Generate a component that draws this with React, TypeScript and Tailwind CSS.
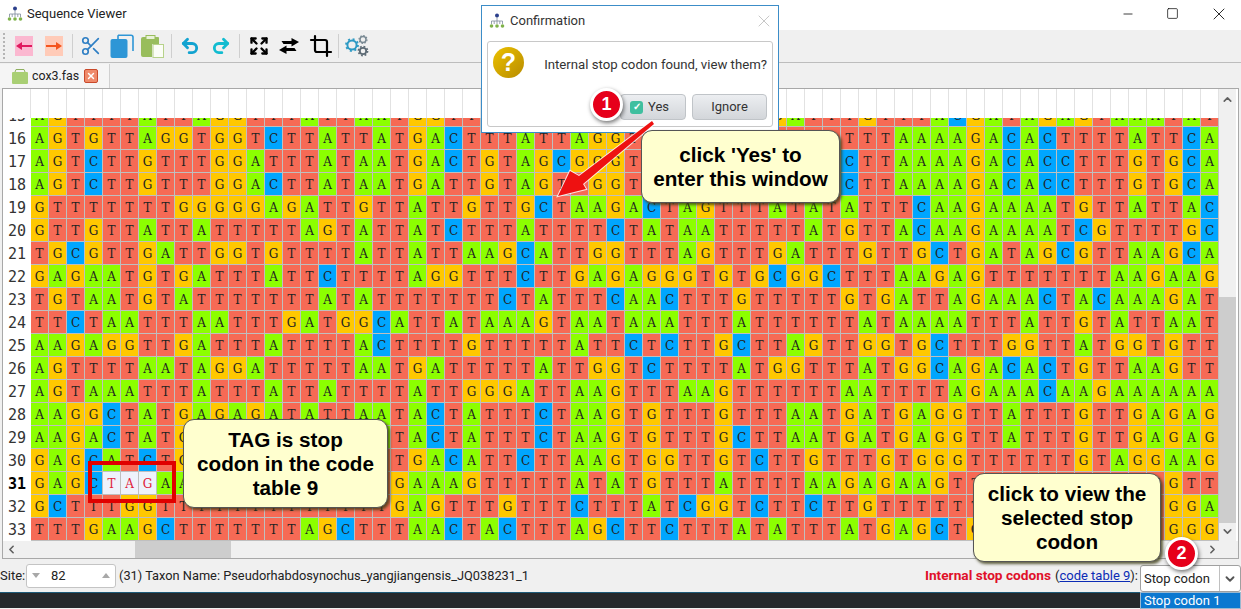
import { Scissors, Undo2, Redo2, Expand, Crop, ChevronUp, ChevronDown, ChevronLeft, ChevronRight, X, Minus, Square } from "lucide-react";

const F = "TTTTTTTTTT";

// one string per taxon, 66 sites each; hidden-by-callout sites are filled with T
const ROWS: [string, string][] = [
  ["15", "AGTTTTATTAGGTTTATTAATG" + "GTT" + F + "TTTTTT" + "GAT" + "TTGTTTACGATAGAGTAAATAT"],
  ["16", "AGTGTTAGGTGGTCTTATTATG" + "ACTTTATTAGGT" + F + "T" + "TTTAAAAGACACTTTTATTCA"],
  ["17", "AGTCTTGTTTGGATTTATAATG" + "ACTGTAGCGGGT" + F + "T" + "CTTAAAAGACACCTTTGTGCA"],
  ["18", "AGTCTTGTTTGGACTTATAATG" + "ATTGTAGTTGGT" + F + "T" + "CTTAAAAGACACCTTTGTGCA"],
  ["19", "GTTTTTTTGGGGGAGATTGTTA" + "TTGTTGCTAAGACTAGTTTATA" + "TATTTCAAGAAAATGTTATTAC"],
  ["20", "GTTGTTATTATTTTTAGTATTA" + "TCTTTATTTTCTATAATTTTTA" + "TGTTACAAGAAAATCGTTTTGC"],
  ["21", "TGCGTTGATTGGTGTTTTATTA" + "TTAAGCATTGGTTTAGTTTGAT" + "TTGTTGCTGATAGCGTTAAGCA"],
  ["22", "GAGAATGTGATTTATTCTTTTA" + "GGTTTCTTGAGAGGGTGTGCGG" + "CTTTAAGAGTTTTTTTAAGAAG"],
  ["23", "TGTAATGTATTTTTTTATATTT" + "TTTTCTATTTCAACTTTGTTTT" + "TGTGATTAGAAACTACAAAGAT"],
  ["24", "TTCTAATTTAATTTGATGGCAT" + "TATAAAGTAATAAATTTATTTT" + "TTATAAAATTTATTGTATTAAT"],
  ["25", "AAGAGGTTGATTTATTTTACTT" + "TTGTTTTTATTCTCTTGCTTAG" + "TTGGTGCTTTGGTTATGGTGTT"],
  ["26", "AGTTTTAATAGGATTTTTAATG" + "ATTTTTATTGGTCTTTTATGGT" + "TTATGGCAGACACTGTTAAGTT"],
  ["27", "AGTAAATTTATTTATTATTTTA" + "TTGGGATTAAGTTTAAGTTTTT" + "TAATTTTAGAAACAAGAAAAAA"],
  ["28", "AAGGCTATGAGAGATATTAATA" + "CTATTTCTAAGTGTTTGTTTAA" + "TGATGAGGTTATTTGTTGAGAG"],
  ["29", "AAGACTATGAGAGATATTAATA" + "CTATTTCTAAGTGTTTGCTTAA" + "TGATGAGGTTATTTGTTGAGAG"],
  ["30", "GAGCATCTG" + F + "T" + "TG" + "ACATTCTTAAGTGGTTGTCTTG" + "TTTGTGGGTTTTTTGTAGGAAG"],
  ["31", "GAGCTAGAA" + F + "T" + "GA" + "AAGTTTTTATATGTTTATTTTA" + "AGAGAAGT" + "T" + F + "GTT"],
  ["32", "GCTTTGGTT" + F + "T" + "GA" + "GTTTGTTTCTTTATCGGTCTTC" + "TTGTTTTT" + "T" + F + "GGA"],
  ["33", "TTTGAAGCTTTTTTTAGCTTTA" + "ACTACTTTAGCTTCTTTATATT" + "TATGAGCT" + "G" + F + "GGG"],
];

const CELL_BG: Record<string, string> = {
  A: "bg-[#8cff00]",
  G: "bg-[#ffc800]",
  T: "bg-[#f66a55]",
  C: "bg-[#00a6ff]",
};

const AppLogo = () => (
  <svg width="16" height="16" viewBox="0 0 16 16">
    <circle cx="8" cy="2.5" r="2" fill="#2b3f8c" />
    <path d="M8 4v4M2.5 11V8h11v3M8 8v3M5.2 8v3M10.8 8v3" stroke="#7d8a9c" strokeWidth="0.8" fill="none" />
    <circle cx="2.5" cy="13" r="1.8" fill="#7fb24a" />
    <circle cx="8" cy="13" r="1.8" fill="#7fb24a" />
    <circle cx="13.5" cy="13" r="1.8" fill="#7fb24a" />
  </svg>
);

const NavArrow = ({ dir }: { dir: "left" | "right" }) =>
  dir === "left" ? (
    <svg width="18" height="20" viewBox="0 0 18 20">
      <rect width="18" height="20" fill="#fbb8d0" />
      <path d="M1 10l6-4v3h10v2H7v3z" fill="#e0195f" />
    </svg>
  ) : (
    <svg width="18" height="20" viewBox="0 0 18 20">
      <rect width="18" height="20" fill="#ffcbb8" />
      <path d="M17 10l-6-4v3H1v2h10v3z" fill="#f4551e" />
    </svg>
  );

const CopyIcon = () => (
  <svg width="24" height="24" viewBox="0 0 24 24">
    <path d="M8 1.2h13a2 2 0 0 1 2 2V17" fill="none" stroke="#2e96d6" strokeWidth="1.6" />
    <path d="M8 1.2V5" stroke="#2e96d6" strokeWidth="1.6" />
    <rect x="0.5" y="5" width="17" height="19" rx="2" fill="#2e96d6" />
  </svg>
);

const PasteIcon = () => (
  <svg width="23" height="24" viewBox="0 0 23 24">
    <path d="M2 3h15a1 1 0 0 1 1 1v6H11v13H2a2 2 0 0 1-2-2V5a2 2 0 0 1 2-2z" fill="#98bd5c" />
    <rect x="5" y="1.5" width="9" height="4" fill="#e9f2d8" stroke="#98bd5c" />
    <rect x="12" y="10.5" width="10.5" height="13" fill="#fbfdf6" stroke="#b7d28a" />
  </svg>
);

const SwapIcon = () => (
  <svg width="20" height="16" viewBox="0 0 20 16">
    <path d="M12.5 0L20 4l-7.5 4.5V6H4.5L2.5 3h10z" fill="#000" />
    <path d="M7.5 16L0 12l7.5-4.5V10H15.5l2 3h-10z" fill="#000" />
  </svg>
);

const GearsIcon = () => (
  <svg width="24" height="23" viewBox="0 0 24 23">
    <circle cx="7" cy="10" r="4.6" fill="none" stroke="#2e9ac4" strokeWidth="2" />
    <circle cx="7" cy="10" r="6" fill="none" stroke="#2e9ac4" strokeWidth="1.8" strokeDasharray="2 2.7" />
    <circle cx="18" cy="4.5" r="3" fill="none" stroke="#7a8a94" strokeWidth="1.5" />
    <circle cx="18" cy="4.5" r="4" fill="none" stroke="#7a8a94" strokeWidth="1.2" strokeDasharray="1.5 1.6" />
    <circle cx="18" cy="16" r="3.2" fill="none" stroke="#5d6b75" strokeWidth="1.8" />
    <circle cx="18" cy="16" r="4.6" fill="none" stroke="#5d6b75" strokeWidth="1.6" strokeDasharray="1.8 1.8" />
  </svg>
);

const ToolSep = () => <div className="w-px h-[24px] bg-[#cfcfcf]" />;

const Toolbar = () => (
  <div className="h-[33px] bg-[#f0f0f0] border-b border-[#bdbdbd] flex items-center pl-[3px]">
    <div className="h-[26px] w-[2px] border-l-2 border-dotted border-[#b5b5b5] mr-[10px]" />
    <NavArrow dir="left" />
    <div className="ml-[12px]"><NavArrow dir="right" /></div>
    <div className="ml-[9px]"><ToolSep /></div>
    <Scissors className="ml-[7px] text-[#2f7fc4]" size={22} strokeWidth={1.8} />
    <div className="ml-[8px]"><CopyIcon /></div>
    <div className="ml-[7px]"><PasteIcon /></div>
    <div className="ml-[7px]"><ToolSep /></div>
    <Undo2 className="ml-[8px] text-[#12a3d0]" size={20} strokeWidth={3.4} />
    <Redo2 className="ml-[11px] text-[#12bcd0]" size={20} strokeWidth={3.4} />
    <div className="ml-[8px]"><ToolSep /></div>
    <Expand className="ml-[9px] text-black" size={20} strokeWidth={2.8} />
    <div className="ml-[10px]"><SwapIcon /></div>
    <Crop className="ml-[10px] text-black" size={24} strokeWidth={2.2} />
    <div className="ml-[5px]"><ToolSep /></div>
    <div className="ml-[6px]"><GearsIcon /></div>
  </div>
);

const TabStrip = () => (
  <div className="h-[25px] bg-[#f0f0f0] flex items-end">
    <div className="h-[24px] w-[110px] bg-[#f5f5f5] border-r border-[#d0d0d0] flex items-center pl-[12px] text-[12.4px] text-[#222]">
      <svg width="16" height="15" viewBox="0 0 16 15">
        <path d="M3 3l1-2.5h8L13 3" fill="none" stroke="#8fb060" />
        <rect y="3" width="16" height="12" rx="1" fill="#a9cf74" />
      </svg>
      <span className="ml-[4px] w-[52px]">cox3.fas</span>
      <span className="w-[14px] h-[14px] rounded-[2px] bg-[#ef8a6b] border border-[#c9492a] flex items-center justify-center">
        <X size={10} strokeWidth={3.5} className="text-white" />
      </span>
    </div>
  </div>
);

const SeqRow = ({ label, seq }: { label: string; seq: string }) => {
  const isStopRow = label === "31";
  return (
    <div className="flex h-[23px]">
      <div
        className={`w-[28px] shrink-0 pl-[5px] pt-px text-[15px] leading-[23px] text-[#333] font-['DejaVu_Sans_Mono',monospace] ${isStopRow ? "font-bold text-black" : ""}`}
      >
        {label}
      </div>
      {seq.split("").map((base, i) => {
        const stop = isStopRow && i >= 4 && i <= 6;
        return (
          <div
            key={i}
            className={`w-[18px] h-[23px] shrink-0 border-r border-b border-[#bfbfbf] flex items-center justify-center pt-px text-[12px] font-['DejaVu_Serif',serif] ${stop ? "bg-[#eef2fb] text-[#e0203a]" : `${CELL_BG[base]} text-[#222]`}`}
          >
            {base}
          </div>
        );
      })}
    </div>
  );
};

const SeqPanel = () => (
  <div className="mx-[2px] h-[471px] border border-[#a8a8a8] flex flex-col bg-white">
    <div className="flex flex-1 min-h-0">
      <div className="w-[1216px] flex flex-col">
        <div className="h-[29px] flex shrink-0">
          <div className="w-[28px] border-r border-[#e2e2e2]" />
          {Array.from({ length: 66 }).map((_, i) => (
            <div key={i} className="w-[18px] shrink-0 border-r border-[#e2e2e2]" />
          ))}
        </div>
        <div className="h-[423px] overflow-hidden">
          <div className="-mt-[14px]">
            {ROWS.map(([label, seq]) => (
              <SeqRow key={label} label={label} seq={seq} />
            ))}
          </div>
        </div>
      </div>
      <div className="w-[17px] bg-[#f0f0f0] flex flex-col items-center relative">
        <ChevronUp size={13} strokeWidth={3} className="mt-[4px] text-[#606060]" />
        <div className="w-full h-[226px] bg-[#cdcdcd] mt-[191px]" />
        <ChevronDown size={13} strokeWidth={3} className="mt-[2px] text-[#606060]" />
      </div>
    </div>
    <div className="h-[17px] bg-[#f0f0f0] flex items-center">
      <ChevronLeft size={13} strokeWidth={3} className="ml-[2px] text-[#606060]" />
      <div className="ml-[117px] w-[96px] h-full bg-[#cdcdcd]" />
      <ChevronRight size={13} strokeWidth={3} className="ml-auto mr-[19px] text-[#606060]" />
    </div>
  </div>
);

const StatusBar = () => (
  <div className="h-[33px] bg-[#f0f0f0] flex items-center text-[13px] text-[#222] relative">
    <span className="w-[26px]">Site:</span>
    <div className="w-[90px] h-[24px] bg-white border border-[#c4c4c4] rounded-[3px] flex items-center px-[5px]">
      <span className="w-0 h-0 border-x-[4px] border-x-transparent border-t-[5px] border-t-[#a8a8a8]" />
      <span className="ml-[11px]">82</span>
      <span className="ml-auto w-0 h-0 border-x-[4px] border-x-transparent border-b-[5px] border-b-[#a8a8a8]" />
    </div>
    <span className="ml-[3px] text-[12.8px]">(31) Taxon Name: Pseudorhabdosynochus_yangjiangensis_JQ038231_1</span>
    <span className="ml-auto font-bold text-[13.7px] text-[#e0102a]">Internal stop codons</span>
    <span className="ml-[4px]">
      (<span className="text-[#0b2bb5] underline">code table 9</span>):
    </span>
    <div className="ml-[2px] mt-[6px] w-[101px] h-[27px] bg-white border border-[#a0a0a0] rounded-[3px] flex items-center pl-[3px]">
      <span>Stop codon</span>
      <span className="ml-auto h-full w-[21px] border-l border-[#c0c0c0] flex items-center justify-center">
        <ChevronDown size={14} strokeWidth={3.2} className="text-[#555]" />
      </span>
    </div>
  </div>
);

const Badge = ({ n, className }: { n: number; className: string }) => (
  <div
    className={`absolute w-[33px] h-[33px] rounded-full border-[3px] border-white bg-[#e6001a] shadow-[1px_2px_4px_rgba(0,0,0,0.55)] flex items-center justify-center text-white font-bold text-[18px] font-['Liberation_Sans',sans-serif] ${className}`}
  >
    {n}
  </div>
);

const Callout = ({ lines, className }: { lines: string[]; className: string }) => (
  <div
    className={`absolute bg-[#ffffcf] border border-[#555] rounded-[11px] shadow-[2px_2px_3px_rgba(60,60,20,0.8)] flex flex-col items-center justify-center pt-px text-black font-bold text-[20.7px] leading-[24px] font-['Liberation_Sans',sans-serif] ${className}`}
  >
    {lines.map((l) => (
      <span key={l}>{l}</span>
    ))}
  </div>
);

const ConfirmDialog = () => (
  <div className="absolute left-[481px] top-[5px] w-[298px] h-[128px] bg-white border border-[#3c8dc8] flex flex-col text-[13px] text-[#333]">
    <div className="h-[29px] mb-[6px] flex items-center pl-[7px] pr-[4px] shrink-0">
      <AppLogo />
      <span className="ml-[5px]">Confirmation</span>
      <X size={20} strokeWidth={0.8} className="ml-auto text-[#aaa]" />
    </div>
    <div className="mx-[5px] h-[86px] border border-[#c8c8c8] rounded-[3px] pl-[5px] pr-[5px] pt-[5px] flex flex-col">
      <div className="flex items-start">
        <div className="w-[31px] h-[31px] rounded-full bg-gradient-to-br from-[#ecc100] to-[#b88c00] flex items-center justify-center text-white font-bold text-[25px] leading-none font-['Liberation_Sans',sans-serif]">
          ?
        </div>
        <span className="ml-auto mt-[8px] text-[13.2px]">Internal stop codon found, view them?</span>
      </div>
      <div className="flex justify-end gap-[6px] mt-[16px]">
        <div className="w-[66px] h-[26px] rounded-[4px] border border-[#c0c4c8] bg-gradient-to-b from-[#eceef1] to-[#d3d6da] flex items-center pl-[9px]">
          <span className="w-[13px] h-[13px] rounded-[3px] bg-[#3fbf9f] flex items-center justify-center text-white text-[10px] leading-none font-bold mr-[5px]">
            ✓
          </span>
          Yes
        </div>
        <div className="w-[75px] h-[26px] rounded-[4px] border border-[#c0c4c8] bg-gradient-to-b from-[#eceef1] to-[#d3d6da] flex items-center justify-center">
          Ignore
        </div>
      </div>
    </div>
  </div>
);

const PointerArrow = () => (
  <svg className="absolute left-[550px] top-[115px]" width="110" height="90" viewBox="550 115 110 90">
    <polygon points="652,121 579,176 570,171 558,196 586,189 583,184 654,124" fill="#e8e8e8" opacity="0.8" stroke="#fff" strokeWidth="2" />
    <polygon points="652,121 579,176 570,171 558,196 586,189 583,184 654,124" fill="#ee1111" />
  </svg>
);

const App = () => (
  <div className="relative w-[1241px] h-[609px] overflow-hidden bg-[#f0f0f0] font-['Roboto',sans-serif]">
    {/* Title bar */}
    <div className="h-[30px] pb-[3px] bg-white flex items-center pl-[7px] text-[13px] text-[#222]">
      <AppLogo />
      <span className="ml-[4px]">Sequence Viewer</span>
      <Minus size={14} strokeWidth={1.3} className="ml-auto text-black" />
      <Square size={13} strokeWidth={1.3} className="ml-[31px] text-black" />
      <X size={20} strokeWidth={1} className="ml-[30px] mr-[12px] text-black" />
    </div>
    <Toolbar />
    <TabStrip />
    <SeqPanel />
    <StatusBar />
    <div className="h-[16px] bg-[#25282b] border-t border-[#1d5a78]" />

    {/* Overlays */}
    <div className="absolute left-[1140px] top-[592px] w-[101px] h-[17px] bg-[#0b78d0] border border-[#9bb8cf] text-white text-[13px] leading-[15px] pl-[3px]">
      Stop codon 1
    </div>
    <ConfirmDialog />
    <PointerArrow />
    <div className="absolute left-[88px] top-[461px] w-[88px] h-[42px] border-[4px] border-[#e00000]" />
    <Callout lines={["click 'Yes' to", "enter this window"]} className="left-[641px] top-[130px] w-[199px] h-[73px]" />
    <Callout lines={["TAG is stop", "codon in the code", "table 9"]} className="left-[183px] top-[419px] w-[205px] h-[89px]" />
    <Callout lines={["click to view the", "selected stop", "codon"]} className="left-[973px] top-[473px] w-[188px] h-[89px]" />
    <Badge n={1} className="left-[590px] top-[88px]" />
    <Badge n={2} className="left-[1165px] top-[537px]" />
  </div>
);

export default App;
